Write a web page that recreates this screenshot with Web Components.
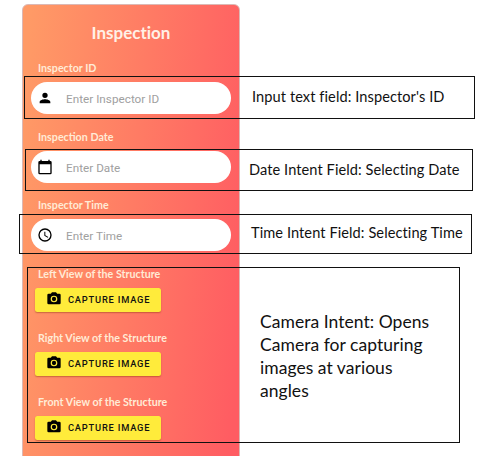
<!DOCTYPE html>
<html lang="en">
<head>
<meta charset="utf-8">
<title>Inspection</title>
<style>
body { margin: 0; background: #fff; width: 482px; height: 456px; overflow: hidden; }
</style>
</head>
<body>
<inspection-board></inspection-board>
<script>
const icons = {
  person: '<path d="M12 12a4 4 0 1 0 0-8 4 4 0 0 0 0 8zm0 2c-2.700 0-8 1.300-8 4v2h16v-2c0-2.700-5.300-4-8-4z"/>',
  calendar: '<path d="M20 3h-1V1h-2v2H7V1H5v2H4a2 2 0 0 0-2 2v16a2 2 0 0 0 2 2h16a2 2 0 0 0 2-2V5a2 2 0 0 0-2-2zm0 18H4V8h16v13z"/>',
  clock: '<path d="M12 2a10 10 0 1 0 0 20 10 10 0 0 0 0-20zm0 18a8 8 0 1 1 0-16 8 8 0 0 1 0 16zm.5-13H11v6l5.200 3.200.8-1.300-4.500-2.700z"/>',
  camera: '<circle cx="12" cy="12" r="3.200"/><path d="M9 2 7.200 4H4a2 2 0 0 0-2 2v12a2 2 0 0 0 2 2h16a2 2 0 0 0 2-2V6a2 2 0 0 0-2-2h-3.200L15 2H9zm3 15a5 5 0 1 1 0-10 5 5 0 0 1 0 10z"/>'
};
function define(name, render) {
  customElements.define(name, class extends HTMLElement {
    connectedCallback() {
      if (this.shadowRoot) return;
      const t = document.createElement('template');
      t.innerHTML = render(this);
      this.attachShadow({ mode: 'open' }).append(t.content.cloneNode(true));
    }
  });
}

define('ui-icon', el => `
<style>:host{display:block;flex:none;width:16px;height:16px}svg{display:block;width:100%;height:100%}</style>
<svg viewBox="0 0 24 24">${icons[el.getAttribute('name')]}</svg>`);

define('form-field', el => `
<style>
:host{display:block;margin-bottom:16.500px}
.label{font:700 10.700px/12px Lato,sans-serif;color:#ffebd6;padding-left:7px;margin-bottom:8px;white-space:nowrap}
.pill{display:flex;align-items:center;gap:13.500px;box-sizing:border-box;height:32px;border-radius:16px;background:#fff;padding:0 6px 0 5.500px}
.hint{font:400 11.700px/16px Roboto,sans-serif;color:#a0a0a0;letter-spacing:.03px;padding-top:2px;white-space:nowrap}
</style>
<div class="label"><slot></slot></div>
<div class="pill"><ui-icon name="${el.getAttribute('icon')}"></ui-icon><span class="hint">${el.getAttribute('hint')}</span></div>`);

define('capture-field', () => `
<style>
:host{display:block;height:64px}
.label{font:700 10.700px/12px Lato,sans-serif;color:#ffebd6;padding-left:7px;margin-bottom:8px;white-space:nowrap}
.btn{display:flex;align-items:center;gap:6px;box-sizing:border-box;width:126px;height:24px;margin-left:4px;padding-left:11px;border-radius:2.500px;background:#ffeb3b;box-shadow:0 1px 1.500px rgba(120,40,0,.4);font:500 9.300px/24px Roboto,sans-serif;letter-spacing:.8px;color:#111;white-space:nowrap}
.btn ui-icon{margin-top:-1px}
.btn span{padding-top:1px}
</style>
<div class="label"><slot></slot></div>
<div class="btn"><ui-icon name="camera"></ui-icon><span>CAPTURE IMAGE</span></div>`);

define('phone-card', () => `
<style>
:host{display:block;box-sizing:border-box;width:218px;height:470px;margin-left:22px;padding:18px 8px 0;border:1px solid #dcb8b4;border-radius:6px;background:linear-gradient(95deg,#ff9a66 3%,#ff5c62 96%)}
h1{margin:0 0 19px;text-align:center;font:700 17px/20px Lato,sans-serif;font-variant-ligatures:none;color:#fff0e6}
</style>
<h1>Inspection</h1><slot></slot>`);

define('note-box', () => `
<style>
:host{display:block;position:absolute;box-sizing:border-box;border:1px solid #111;font-family:Lato,sans-serif;font-variant-ligatures:none;color:#111;white-space:nowrap}
</style><slot></slot>`);

define('inspection-board', () => `
<style>
:host{display:block;position:relative;box-sizing:border-box;width:482px;height:456px;padding-top:4px;overflow:hidden}
note-box{font-size:14.600px;line-height:18px;letter-spacing:.08px}
.id{left:24px;top:76px;width:451px;height:43px;padding:11px 0 0 227px}
.date{left:25px;top:149px;width:448px;height:42px;padding:11px 0 0 223px}
.time{left:19px;top:214px;width:453px;height:40px;padding:9px 0 0 231px}
.camera{left:27px;top:267px;width:433px;height:176px;padding:42px 0 0 232px;font-size:17.500px;line-height:23px;letter-spacing:.04px}
</style>
<phone-card>
<form-field icon="person" hint="Enter Inspector ID">Inspector ID</form-field>
<form-field icon="calendar" hint="Enter Date">Inspection Date</form-field>
<form-field icon="clock" hint="Enter Time">Inspector Time</form-field>
<capture-field>Left View of the Structure</capture-field>
<capture-field>Right View of the Structure</capture-field>
<capture-field>Front View of the Structure</capture-field>
</phone-card>
<note-box class="id">Input text field: Inspector's ID</note-box>
<note-box class="date">Date Intent Field: Selecting Date</note-box>
<note-box class="time">Time Intent Field: Selecting Time</note-box>
<note-box class="camera">Camera Intent: Opens<br>Camera for capturing<br>images at various<br>angles</note-box>`);
</script>
</body>
</html>
